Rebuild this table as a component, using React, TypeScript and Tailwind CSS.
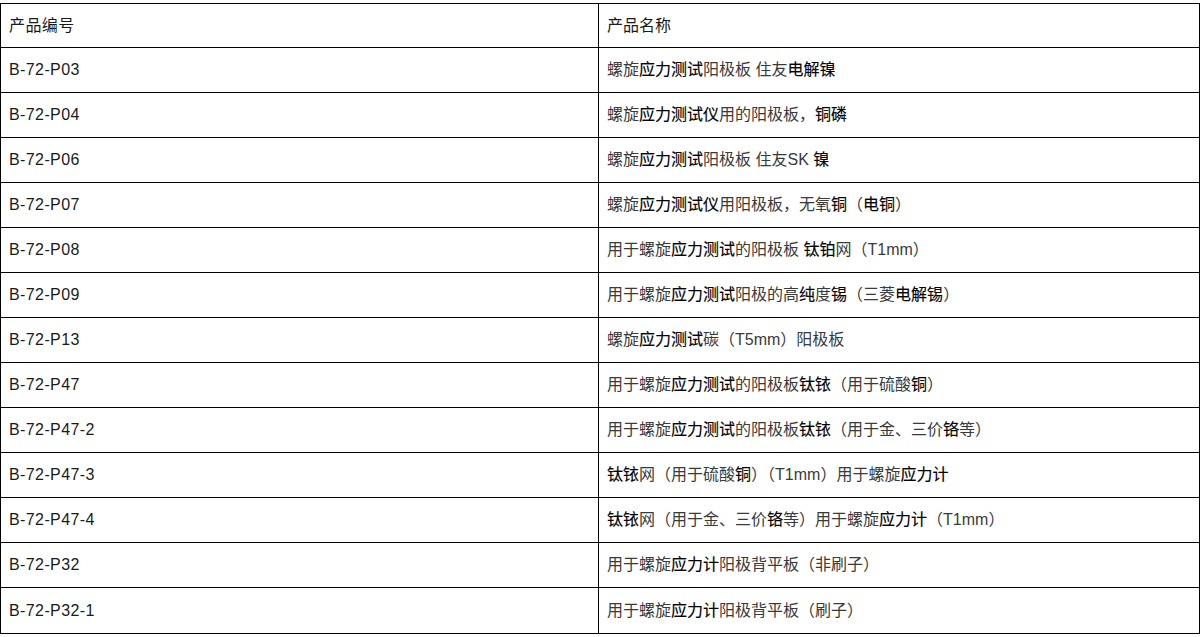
const rows: [string, string][] = [
  ["B-72-P03", "螺旋[应力测试]阳极板 住友[电解镍]"],
  ["B-72-P04", "螺旋[应力测试仪]用的阳极板，[铜磷]"],
  ["B-72-P06", "螺旋[应力测试]阳极板 住友SK [镍]"],
  ["B-72-P07", "螺旋[应力测试仪]用阳极板，无氧[铜]（[电铜]）"],
  ["B-72-P08", "用于螺旋[应力测试]的阳极板 [钛铂]网（T1mm）"],
  ["B-72-P09", "用于螺旋[应力测试]阳极的高[纯]度[锡]（三菱[电解锡]）"],
  ["B-72-P13", "螺旋[应力测试]碳（T5mm）阳极板"],
  ["B-72-P47", "用于螺旋[应力测试]的阳极板[钛铱]（用于硫酸[铜]）"],
  ["B-72-P47-2", "用于螺旋[应力测试]的阳极板[钛铱]（用于金、三价[铬]等）"],
  ["B-72-P47-3", "[钛铱]网（用于硫酸[铜]）（T1mm）用于螺旋[应力计]"],
  ["B-72-P47-4", "[钛铱]网（用于金、三价[铬]等）用于螺旋[应力计]（T1mm）"],
  ["B-72-P32", "用于螺旋[应力计]阳极背平板（非刷子）"],
  ["B-72-P32-1", "用于螺旋[应力计]阳极背平板（刷子）"],
];

// brackets mark the glyphs that come out darker in the original page
function Name({ text }: { text: string }) {
  const parts = text.split(/(\[[^\]]+\])/).filter(Boolean);
  return (
    <span>
      {parts.map((p, i) =>
        p.startsWith("[") ? (
          <span key={i} className="text-black [-webkit-text-stroke:0.15px_#000]">
            {p.slice(1, -1)}
          </span>
        ) : (
          <span key={i}>{p}</span>
        )
      )}
    </span>
  );
}

function Row({ code, name }: { code: React.ReactNode; name: React.ReactNode }) {
  return (
    <div className="flex h-[45px] first:h-[44px]">
      <div className="w-[598px] shrink-0 border-r border-black flex items-center pl-[8px] tracking-[0.4px] text-[#1a1a1a]">
        {code}
      </div>
      <div className="flex-1 flex items-center pl-[8px] text-[#3a3a3a]">{name}</div>
    </div>
  );
}

export default function App() {
  return (
    <div
      className="bg-white w-[1203px] h-[637px] pt-[3px] text-[16px] leading-none"
      style={{ fontFamily: '"Liberation Sans", "Noto Sans CJK SC", sans-serif' }}
    >
      <div className="w-[1200px] border border-black divide-y divide-black">
        <Row code="产品编号" name={<span className="text-[#1a1a1a]">产品名称</span>} />
        {rows.map(([code, name]) => (
          <Row key={code} code={code} name={<Name text={name} />} />
        ))}
      </div>
    </div>
  );
}
